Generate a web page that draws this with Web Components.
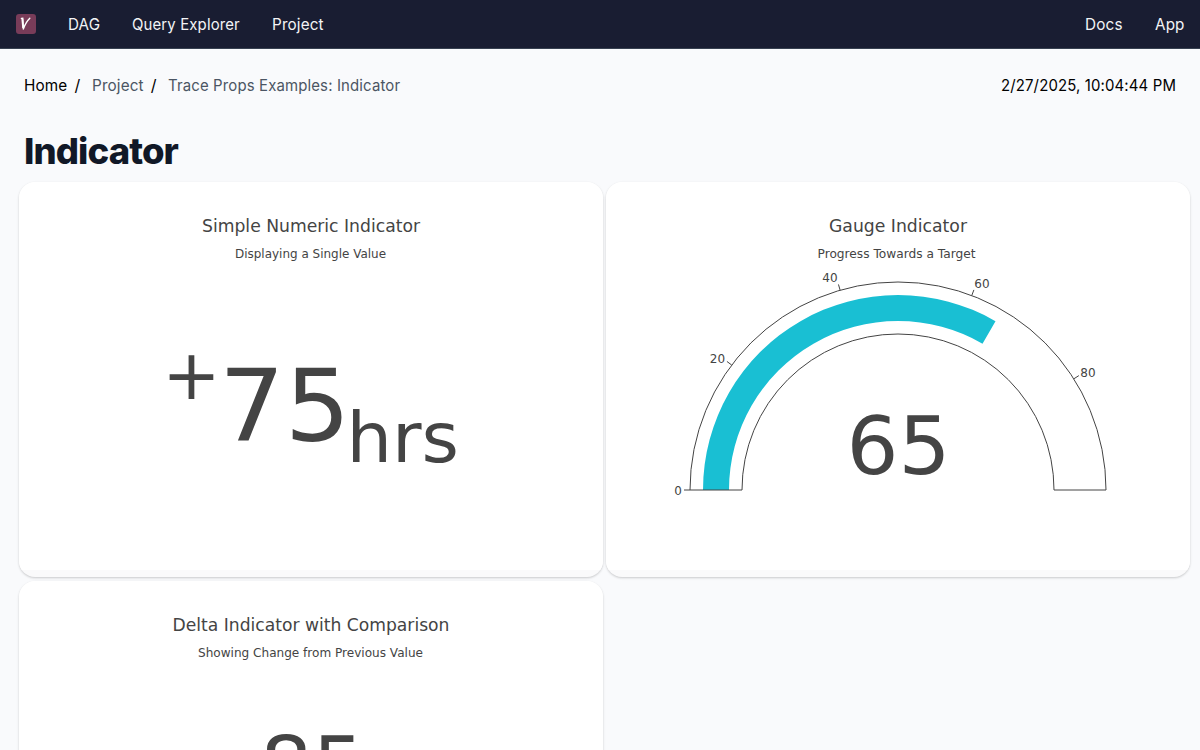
<!DOCTYPE html>
<html lang="en"><head><meta charset="utf-8"><title>Indicator</title>
<style>html,body{margin:0;height:750px;overflow:hidden;background:#f9fafc}body{font:16px/24px Inter,sans-serif;color:#000}</style></head>
<body><app-page></app-page>
<script>
const define=(name,html)=>customElements.define(name,class extends HTMLElement{
 constructor(){super();this.attachShadow({mode:'open'}).innerHTML=html}
});
define('app-logo',`<style>:host{display:block;width:20px;height:20px}svg{display:block}</style>
<svg width="20" height="20" viewBox="0 0 20 20"><rect width="20" height="20" rx="3" fill="#783c59"/><path d="M5.4 4.4L6.7 4.2L7.3 14.6M7.3 15C8.6 11.5 10.6 7.3 13.8 4.2" fill="none" stroke="#fff" stroke-width="1.4" stroke-linecap="round"/><path d="M6.3 4.5L7.2 14" stroke="#fff" stroke-width="1.9"/></svg>`);
customElements.define('text-fit',class extends HTMLElement{
 constructor(){super();this.attachShadow({mode:'open'}).innerHTML='<style>:host{display:block;white-space:nowrap}span{display:inline-block;transform-origin:0 50%;letter-spacing:var(--track,.15px)}</style><span><slot></slot></span>'}
 connectedCallback(){
  const span=this.shadowRoot.querySelector('span'),w=+this.getAttribute('w');
  this.style.width=w+'px';
  span.style.transform=`scaleX(${w/span.offsetWidth})`;
 }
});
define('app-nav',`<style>:host{display:flex;box-sizing:border-box;height:49px;padding:0 16px;align-items:center;gap:32px;background:#191d32;border-bottom:1px solid #374151;color:#f3f4f6}.space{flex:1}</style>
<app-logo></app-logo><text-fit w="32.3">DAG</text-fit><text-fit w="108.2">Query Explorer</text-fit><text-fit w="51.5">Project</text-fit><div class="space"></div><text-fit w="37.3">Docs</text-fit><text-fit w="29.5">App</text-fit>`);
define('bread-crumbs',`<style>:host{display:flex;padding:24px 24px 0;height:24px}.g{color:#4b5563}.s{width:8px;margin:0 9px 0 7.6px}.space{flex:1}</style>
<text-fit w="43">Home</text-fit><span class="s">/</span><text-fit class="g" w="51.5">Project</text-fit><span class="s">/</span><text-fit class="g" w="232.5">Trace Props Examples: Indicator</text-fit><div class="space"></div><text-fit w="175.5">2/27/2025, 10:04:44 PM</text-fit>`);
define('chart-card',`<style>:host{display:block;height:395px;border-radius:16px;background:#fafafb;overflow:hidden;box-shadow:0 1px 3px rgba(0,0,0,.1),0 1px 2px rgba(0,0,0,.1)}.plot{height:388px;background:#fff}</style><div class="plot"><slot></slot></div>`);
customElements.define('plot-indicator',class extends HTMLElement{
 connectedCallback(){
  const a=n=>this.getAttribute(n),kind=a('kind'),tw=+a('tw'),sw=+a('sw');
  const text=(s,x,y,size,w,anchor='middle')=>`<text x="${x}" y="${y}" font-size="${size}" text-anchor="${anchor}" textLength="${w}" lengthAdjust="spacingAndGlyphs">${s}</text>`;
  let body='';
  if(kind==='number')body=text('+',143.2,216.5,70,58.4,'start')+text('75',200,259,100,131.5,'start')+text('hrs',327.5,280,70,112.5,'start');
  if(kind==='delta')body=text('85',293.5,213,80,105);
  if(kind==='gauge'){
   const pt=(r,v)=>{const t=Math.PI*(1-v/97.5);return[292+r*Math.cos(t),308-r*Math.sin(t)].map(n=>n.toFixed(2)).join(' ')};
   const arc=(r1,r2,v)=>`M${pt(r1,0)}A${r1} ${r1} 0 0 1 ${pt(r1,v)}L${pt(r2,v)}A${r2} ${r2} 0 0 0 ${pt(r2,0)}Z`;
   body=`<path d="${arc(195,169,65)}" fill="#19bfd3"/><path d="${arc(208,156,97.5)}" fill="none" stroke="#444"/>`;
   for(const v of [0,20,40,60,80])body+=`<path d="M${pt(208,v)}L${pt(214,v)}" stroke="#444"/>`;
   for(const [s,x,y,w] of [[0,72,313,7.6],[20,111.5,181,15.3],[40,224,100,15.3],[60,376,106,15.3],[80,482,195,15.3]])body+=text(s,x,y,12,w);
   body+=text('65',292.5,292.3,80,104);
  }
  this.attachShadow({mode:'open'}).innerHTML=`<style>:host,svg{display:block}text{font-family:"DejaVu Sans",sans-serif;fill:#444}</style><svg width="584" height="388">${text(a('heading'),292,50,17.8,tw)}${text(a('sub'),a('sx')||291.5,76,12,sw)}${body}</svg>`;
 }
});
define('app-page',`<style>:host{display:block}h1{margin:34px 0 0 24px;width:max-content;font:800 36px/40px Inter,sans-serif;color:#111827;--track:-.9px}main{display:grid;grid-template-columns:584px 584px;gap:4px 3px;margin:11px 0 0 19px}</style>
<app-nav></app-nav><bread-crumbs></bread-crumbs><h1><text-fit w="154">Indicator</text-fit></h1>
<main><chart-card><plot-indicator kind="number" heading="Simple Numeric Indicator" tw="218" sub="Displaying a Single Value" sw="151"></plot-indicator></chart-card>
<chart-card><plot-indicator kind="gauge" heading="Gauge Indicator" tw="138" sub="Progress Towards a Target" sw="158" sx="290.5"></plot-indicator></chart-card>
<chart-card><plot-indicator kind="delta" heading="Delta Indicator with Comparison" tw="277" sub="Showing Change from Previous Value" sw="225"></plot-indicator></chart-card></main>`);
</script></body></html>
